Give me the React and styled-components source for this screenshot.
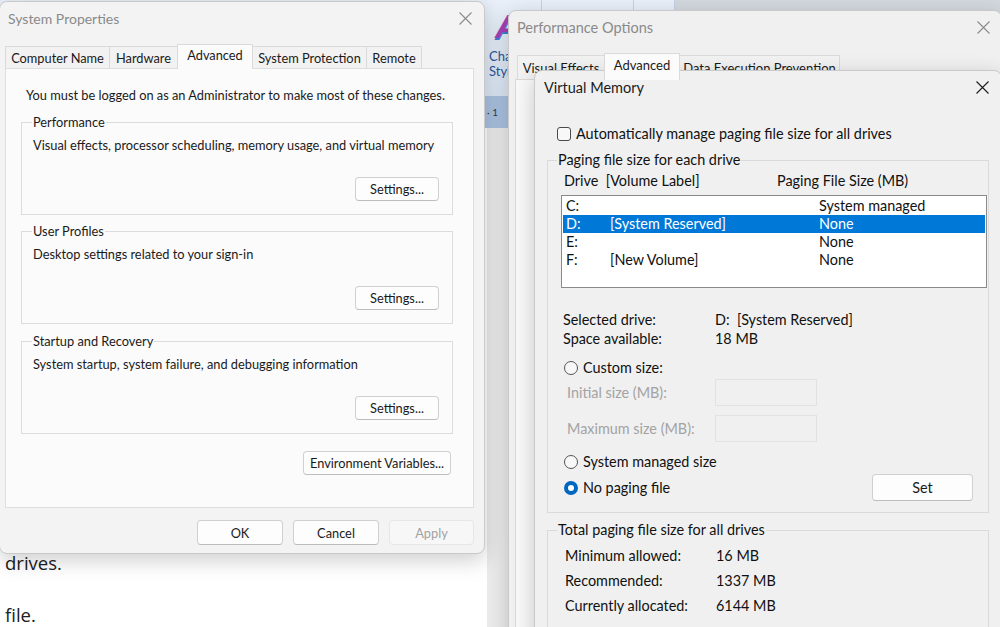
import React from 'react';
import styled, { createGlobalStyle } from 'styled-components';

const GlobalStyle = createGlobalStyle`
  html, body {
    margin: 0;
    padding: 0;
    overflow: hidden;
  }
  body {
    font-family: Lato, "Noto Sans", sans-serif;
    color: #1a1a1a;
  }
`;

const Desktop = styled.div`
  position: relative;
  width: 1000px;
  height: 627px;
  overflow: hidden;
  display: flex;
  flex-direction: column;
  background: #fff;
`;

/* ---------- word document behind the dialogs ---------- */

const Ribbon = styled.div`
  display: flex;
  flex-shrink: 0;
  height: 96px;
  background: linear-gradient(#e9f0f9, #dbe6f4);
`;

const RibbonGallery = styled.div`
  width: 484px;
`;

const RibbonButton = styled.div`
  width: ${(p) => p.$w}px;
  margin-left: ${(p) => p.$gap || 0}px;
  display: flex;
  flex-direction: column;
  padding: 11px 0 0 5px;
  box-sizing: border-box;
  border-right: 1px solid #c4d2e4;
  color: #2a5597;
  font-size: 13px;
  line-height: 15px;
`;

const StyleGlyph = styled.span`
  font-family: "Liberation Sans", sans-serif;
  font-style: italic;
  font-weight: bold;
  font-size: 34px;
  line-height: 30px;
  margin: 0 0 8px 6px;
  color: #a640b8;
  text-shadow: 0 2px 0 #3d7fd0;
`;

const RibbonRest = styled.div`
  flex: 1;
  background: #d3d8de;
`;

const Ruler = styled.div`
  height: 32px;
  flex-shrink: 0;
  background: #a9c1e0;
  display: flex;
  align-items: center;
  padding-left: 487px;
  font-size: 10px;
  color: #3a3a3a;
`;

const DocArea = styled.div`
  flex: 1;
  min-height: 0;
  display: flex;
`;

const Page = styled.div`
  width: 487px;
  background: #fff;
  padding: 422px 0 0 5px;
  box-sizing: border-box;
`;

const DocPara = styled.p`
  margin: 0 0 26px;
  font-family: "Open Sans", sans-serif;
  font-size: 18.5px;
  line-height: 26px;
  color: #202020;
`;

const Gutter = styled.div`
  flex: 1;
  background: #ebebeb;
`;

/* ---------- window chrome ---------- */

const Window = styled.div`
  position: absolute;
  left: ${(p) => p.$x}px;
  top: ${(p) => p.$y}px;
  width: ${(p) => p.$w}px;
  height: ${(p) => p.$h}px;
  box-sizing: border-box;
  display: flex;
  flex-direction: column;
  background: ${(p) => p.$bg};
  border: 1px solid #c9c9c9;
  border-radius: 8px;
  box-shadow: 0 6px 22px rgba(0, 0, 0, 0.2);
`;

const TitleBar = styled.div`
  height: ${(p) => p.$h}px;
  flex-shrink: 0;
  display: flex;
  align-items: center;
  justify-content: space-between;
  padding: 0 ${(p) => p.$pr}px 0 ${(p) => p.$pl}px;
  font-size: ${(p) => p.$size}px;
  color: ${(p) => (p.$active ? '#1b1b1b' : '#8a8a8a')};
`;

const CloseIcon = ({ color }) => (
  <svg width="13" height="13" viewBox="0 0 13 13">
    <path d="M0.5 0.5 L12.5 12.5 M12.5 0.5 L0.5 12.5" stroke={color} strokeWidth="1.1" fill="none" />
  </svg>
);

const TabRow = styled.div`
  display: flex;
  align-items: flex-end;
  height: ${(p) => p.$h}px;
  margin-top: ${(p) => p.$mt || 0}px;
  padding-left: ${(p) => p.$pl}px;
  flex-shrink: 0;
`;

const Tab = styled.div`
  width: ${(p) => p.$w}px;
  height: ${(p) => (p.$on ? p.$h + 3 : p.$h)}px;
  margin-right: -1px;
  margin-bottom: ${(p) => (p.$on ? -1 : 0)}px;
  position: relative;
  z-index: ${(p) => (p.$on ? 1 : 0)};
  box-sizing: border-box;
  display: flex;
  align-items: center;
  justify-content: center;
  padding-bottom: ${(p) => (p.$on ? 4 : 0)}px;
  border: 1px solid #dadada;
  border-bottom: none;
  background: ${(p) => (p.$on ? '#fbfbfb' : '#f2f2f2')};
  font-size: ${(p) => p.$size}px;
  white-space: nowrap;
  overflow: hidden;
`;

const Button = styled.button`
  width: ${(p) => p.$w}px;
  height: ${(p) => p.$h || 24}px;
  padding: 0;
  box-sizing: border-box;
  border: 1px solid ${(p) => (p.disabled ? '#e6e6e6' : '#d0d0d0')};
  border-bottom-color: ${(p) => (p.disabled ? '#e6e6e6' : '#bdbdbd')};
  border-radius: 4px;
  background: ${(p) => (p.disabled ? '#f7f7f7' : '#fdfdfd')};
  color: ${(p) => (p.disabled ? '#a2a2a2' : '#1a1a1a')};
  font-family: inherit;
  font-size: ${(p) => p.$size || 12.8}px;
`;

/* ---------- System Properties ---------- */

const SysPanel = styled.div`
  height: 440px;
  margin: 0 10px 0 5px;
  box-sizing: border-box;
  padding: 18px 20px 0 15px;
  background: #fbfbfb;
  border: 1px solid #dedede;
  font-size: 12.8px;
  line-height: 16px;
  white-space: nowrap;
`;

const Intro = styled.div`
  padding-left: 5px;
`;

const Group = styled.fieldset`
  margin: ${(p) => p.$mt}px 0 0;
  padding: 0 13px 13px 11px;
  border: 1px solid #dcdcdc;
  min-width: 0;
`;

const GroupLabel = styled.legend`
  padding: 0 1px;
  margin-left: -1px;
  font-size: ${(p) => p.$size || 12.8}px;
  line-height: ${(p) => p.$lh || 16}px;
`;

const GroupText = styled.div`
  margin-top: 7px;
`;

const ButtonRow = styled.div`
  display: flex;
  justify-content: flex-end;
  gap: ${(p) => p.$gap || 0}px;
  margin-top: ${(p) => p.$mt || 0}px;
  padding-right: ${(p) => p.$pr || 0}px;
`;

/* ---------- Virtual Memory ---------- */

const VmBody = styled.div`
  flex: 1;
  padding: 0 12px;
  font-size: 14.4px;
  line-height: 18px;
  color: #111;
  white-space: nowrap;
`;

const CheckRow = styled.label`
  display: flex;
  align-items: center;
  gap: 5px;
  margin: 21px 0 0 10px;
`;

const CheckBox = styled.span`
  width: 14px;
  height: 14px;
  box-sizing: border-box;
  border: 1px solid #4a4a4a;
  border-radius: 3px;
  background: #f8f8f8;
`;

const VmGroup = styled.fieldset`
  margin: ${(p) => p.$mt}px 0 0;
  padding: 0 1px ${(p) => p.$pb}px 10px;
  border: 1px solid #dadada;
  min-width: 0;
`;

const Columns = styled.div`
  display: grid;
  grid-template-columns: ${(p) => p.$cols};
  margin: ${(p) => p.$m};
  line-height: ${(p) => p.$lh || 18}px;
`;

const DriveList = styled.div`
  height: 93px;
  margin: 5px 0 0 3px;
  box-sizing: border-box;
  padding: 1px;
  border: 1px solid #8a8a8a;
  background: #fff;
`;

const DriveRow = styled.div`
  display: grid;
  grid-template-columns: 44px 209px 1fr;
  height: 18px;
  line-height: 18px;
  padding-left: 3px;
  background: ${(p) => (p.$on ? '#0078d7' : 'transparent')};
  color: ${(p) => (p.$on ? '#fff' : '#111')};
`;

const RadioRow = styled.div`
  display: flex;
  align-items: center;
  gap: 5px;
  height: ${(p) => p.$h || 20}px;
  margin: ${(p) => p.$mt}px 0 0 6px;
`;

const Radio = styled.span`
  width: 14px;
  height: 14px;
  box-sizing: border-box;
  border-radius: 50%;
  border: ${(p) => (p.$on ? '4px solid #0067c0' : '1px solid #555')};
  background: ${(p) => (p.$on ? '#fff' : '#f8f8f8')};
`;

const SizeRow = styled.div`
  display: grid;
  grid-template-columns: 148px 102px;
  align-items: center;
  height: 27px;
  margin: ${(p) => p.$mt}px 0 0 9px;
  color: #a3a3a3;
`;

const SizeInput = styled.div`
  height: 27px;
  box-sizing: border-box;
  border: 1px solid #e2e2e2;
  background: #f0f0f0;
`;

const Spacer = styled.div`
  flex: 1;
`;

const drives = [
  { letter: 'C:', label: '', size: 'System managed' },
  { letter: 'D:', label: '[System Reserved]', size: 'None', on: true },
  { letter: 'E:', label: '', size: 'None' },
  { letter: 'F:', label: '[New Volume]', size: 'None' },
];

function SystemProperties() {
  const tabs = [
    ['Computer Name', 105],
    ['Hardware', 69],
    ['Advanced', 76],
    ['System Protection', 115],
    ['Remote', 56],
  ];
  const groups = [
    ['Performance', 'Visual effects, processor scheduling, memory usage, and virtual memory', 11],
    ['User Profiles', 'Desktop settings related to your sign-in', 8],
    ['Startup and Recovery', 'System startup, system failure, and debugging information', 9],
  ];
  return (
    <Window $x={-1} $y={1} $w={486} $h={553} $bg="#f3f3f3">
      <TitleBar $h={32} $pl={8} $pr={12} $size={14}>
        <span>System Properties</span>
        <CloseIcon color="#8a8a8a" />
      </TitleBar>
      <TabRow $h={34} $pl={5}>
        {tabs.map(([name, w]) => (
          <Tab key={name} $w={w} $h={22} $size={12.8} $on={name === 'Advanced'}>
            {name}
          </Tab>
        ))}
      </TabRow>
      <SysPanel>
        <Intro>You must be logged on as an Administrator to make most of these changes.</Intro>
        {groups.map(([title, text, mt]) => (
          <Group key={title} $mt={mt}>
            <GroupLabel>{title}</GroupLabel>
            <GroupText>{text}</GroupText>
            <ButtonRow $mt={24}>
              <Button $w={84}>Settings...</Button>
            </ButtonRow>
          </Group>
        ))}
        <ButtonRow $mt={17} $pr={2}>
          <Button $w={148}>Environment Variables...</Button>
        </ButtonRow>
      </SysPanel>
      <ButtonRow $mt={12} $gap={10} $pr={10}>
        <Button $w={86} $h={25}>OK</Button>
        <Button $w={86} $h={25}>Cancel</Button>
        <Button $w={85} $h={25} disabled>Apply</Button>
      </ButtonRow>
    </Window>
  );
}

const PerfPanel = styled.div`
  flex: 1;
  margin: 0 0 0 6px;
  background: #f9f9f9;
  border: 1px solid #d9d9d9;
`;

function PerformanceOptions() {
  const tabs = [
    ['Visual Effects', 88],
    ['Advanced', 76],
    ['Data Execution Prevention', 161],
  ];
  return (
    <Window $x={508} $y={10} $w={494} $h={640} $bg="#f0f0f0">
      <TitleBar $h={33} $pl={8} $pr={11} $size={14.5}>
        <span>Performance Options</span>
        <CloseIcon color="#8a8a8a" />
      </TitleBar>
      <TabRow $h={25} $mt={10} $pl={8}>
        {tabs.map(([name, w]) => (
          <Tab key={name} $w={w} $h={24} $size={13} $on={name === 'Advanced'}>
            {name}
          </Tab>
        ))}
      </TabRow>
      <PerfPanel />
    </Window>
  );
}

function VirtualMemory() {
  return (
    <Window $x={534} $y={70} $w={468} $h={580} $bg="#f0f0f0">
      <TitleBar $h={33} $pl={9} $pr={12} $size={14.5} $active>
        <span>Virtual Memory</span>
        <CloseIcon color="#1b1b1b" />
      </TitleBar>
      <VmBody>
        <CheckRow>
          <CheckBox />
          Automatically manage paging file size for all drives
        </CheckRow>
        <VmGroup $mt={8} $pb={11}>
          <GroupLabel $size={14.4} $lh={18}>Paging file size for each drive</GroupLabel>
          <Columns $cols="213px 1fr" $m="3px 0 0 6px">
            <span>Drive&nbsp;&nbsp;[Volume Label]</span>
            <span>Paging File Size (MB)</span>
          </Columns>
          <DriveList>
            {drives.map((d) => (
              <DriveRow key={d.letter} $on={d.on}>
                <span>{d.letter}</span>
                <span>{d.label}</span>
                <span>{d.size}</span>
              </DriveRow>
            ))}
          </DriveList>
          <Columns $cols="152px 1fr" $m="22px 0 0 5px" $lh={19}>
            <span>Selected drive:</span>
            <span>D:&nbsp;&nbsp;[System Reserved]</span>
            <span>Space available:</span>
            <span>18 MB</span>
          </Columns>
          <RadioRow $mt={10}>
            <Radio />
            Custom size:
          </RadioRow>
          <SizeRow $mt={1}>
            <span>Initial size (MB):</span>
            <SizeInput />
          </SizeRow>
          <SizeRow $mt={9}>
            <span>Maximum size (MB):</span>
            <SizeInput />
          </SizeRow>
          <RadioRow $mt={10}>
            <Radio />
            System managed size
          </RadioRow>
          <RadioRow $mt={2} $h={27}>
            <Radio $on />
            No paging file
            <Spacer />
            <Button $w={101} $h={27} $size={14.4} style={{ marginRight: 14 }}>Set</Button>
          </RadioRow>
        </VmGroup>
        <VmGroup $mt={8} $pb={30}>
          <GroupLabel $size={14.4} $lh={18}>Total paging file size for all drives</GroupLabel>
          <Columns $cols="151px 1fr" $m="4px 0 0 7px" $lh={25}>
            <span>Minimum allowed:</span>
            <span>16 MB</span>
            <span>Recommended:</span>
            <span>1337 MB</span>
            <span>Currently allocated:</span>
            <span>6144 MB</span>
          </Columns>
        </VmGroup>
      </VmBody>
    </Window>
  );
}

export default function App() {
  return (
    <>
      <GlobalStyle />
      <Desktop>
        <Ribbon>
          <RibbonGallery />
          <RibbonButton $w={58}>
            <StyleGlyph>A</StyleGlyph>
            <span>Change</span>
            <span>Styles</span>
          </RibbonButton>
          <RibbonButton $w={88} $gap={4} />
          <RibbonButton $w={38} $gap={3} />
          <RibbonRest />
        </Ribbon>
        <Ruler>· 1</Ruler>
        <DocArea>
          <Page>
            <DocPara>drives.</DocPara>
            <DocPara>file.</DocPara>
          </Page>
          <Gutter />
        </DocArea>
        <PerformanceOptions />
        <VirtualMemory />
        <SystemProperties />
      </Desktop>
    </>
  );
}
